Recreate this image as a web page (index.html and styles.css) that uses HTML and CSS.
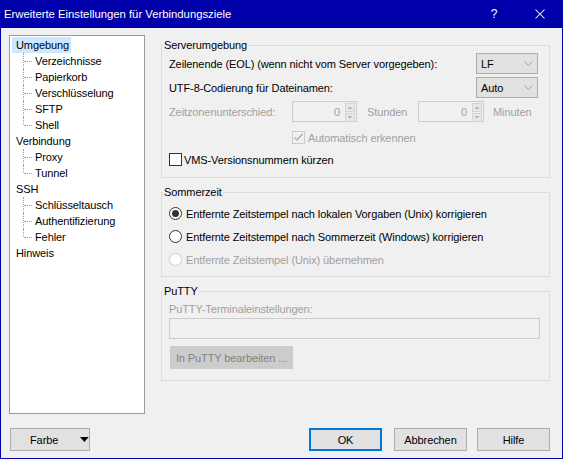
FILE: index.html
```html
<!DOCTYPE html>
<html lang="de">
<head>
<meta charset="utf-8">
<title>Erweiterte Einstellungen für Verbindungsziele</title>
<link rel="stylesheet" href="styles.css">
</head>
<body>
<div class="window">
  <div class="titlebar">
    <span class="title">Erweiterte Einstellungen für Verbindungsziele</span>
    <span class="cap-btn help">?</span>
    <span class="cap-btn close"><svg width="10" height="10" viewBox="0 0 10 10"><path d="M0.5 0.5L9.5 9.5M9.5 0.5L0.5 9.5" stroke="#fff" stroke-width="1.05" fill="none"/></svg></span>
  </div>
  <div class="client">
    <div class="main">
      <div class="tree">
        <ul class="roots">
          <li><span class="label sel">Umgebung</span>
            <ul class="children">
              <li class="child"><span class="label">Verzeichnisse</span></li>
              <li class="child"><span class="label">Papierkorb</span></li>
              <li class="child"><span class="label">Verschlüsselung</span></li>
              <li class="child"><span class="label">SFTP</span></li>
              <li class="child last"><span class="label">Shell</span></li>
            </ul>
          </li>
          <li><span class="label">Verbindung</span>
            <ul class="children">
              <li class="child"><span class="label">Proxy</span></li>
              <li class="child last"><span class="label">Tunnel</span></li>
            </ul>
          </li>
          <li><span class="label">SSH</span>
            <ul class="children">
              <li class="child"><span class="label">Schlüsseltausch</span></li>
              <li class="child"><span class="label">Authentifizierung</span></li>
              <li class="child last"><span class="label">Fehler</span></li>
            </ul>
          </li>
          <li><span class="label">Hinweis</span></li>
        </ul>
      </div>
      <div class="panel">
        <fieldset class="group g1">
          <legend>Serverumgebung</legend>
          <div class="row r-combo">
            <span class="grow">Zeilenende (EOL) (wenn nicht vom Server vorgegeben):</span>
            <div class="combo"><span class="grow">LF</span><svg class="chev" width="9" height="5" viewBox="0 0 9 5"><path d="M0.5 0.5L4.5 4.5L8.5 0.5" stroke="#a2a2a2" fill="none"/></svg></div>
          </div>
          <div class="row r-combo r-combo2">
            <span class="grow">UTF-8-Codierung für Dateinamen:</span>
            <div class="combo"><span class="grow">Auto</span><svg class="chev" width="9" height="5" viewBox="0 0 9 5"><path d="M0.5 0.5L4.5 4.5L8.5 0.5" stroke="#a2a2a2" fill="none"/></svg></div>
          </div>
          <div class="row r-tz disabled">
            <span class="tz-label">Zeitzonenunterschied:</span>
            <div class="spin s1">
              <span class="val">0</span>
              <div class="arrows">
                <span class="arrow"><svg width="8" height="7" viewBox="0 0 8 7"><path d="M1.5 5h5L4 2.5z" fill="#b0b0b0"/></svg></span>
                <span class="arrow"><svg width="8" height="7" viewBox="0 0 8 7"><path d="M1.5 2h5L4 4.5z" fill="#b0b0b0"/></svg></span>
              </div>
            </div>
            <span class="unit u1">Stunden</span>
            <div class="spin s2">
              <span class="val">0</span>
              <div class="arrows">
                <span class="arrow"><svg width="8" height="7" viewBox="0 0 8 7"><path d="M1.5 5h5L4 2.5z" fill="#b0b0b0"/></svg></span>
                <span class="arrow"><svg width="8" height="7" viewBox="0 0 8 7"><path d="M1.5 2h5L4 4.5z" fill="#b0b0b0"/></svg></span>
              </div>
            </div>
            <span class="unit u2">Minuten</span>
          </div>
          <div class="row r-auto disabled">
            <span class="check checked-dis"><svg width="11" height="11" viewBox="0 0 11 11"><path d="M1.5 5.5L4 8L9.5 2" stroke="#a8a8a8" stroke-width="1.2" fill="none"/></svg></span>
            <span>Automatisch erkennen</span>
          </div>
          <div class="row r-vms">
            <span class="check"></span>
            <span>VMS-Versionsnummern kürzen</span>
          </div>
        </fieldset>

        <fieldset class="group g2">
          <legend>Sommerzeit</legend>
          <div class="row r-radio">
            <span class="radio on"></span>
            <span>Entfernte Zeitstempel nach lokalen Vorgaben (Unix) korrigieren</span>
          </div>
          <div class="row r-radio">
            <span class="radio"></span>
            <span>Entfernte Zeitstempel nach Sommerzeit (Windows) korrigieren</span>
          </div>
          <div class="row r-radio disabled">
            <span class="radio dis"></span>
            <span>Entfernte Zeitstempel (Unix) übernehmen</span>
          </div>
        </fieldset>

        <fieldset class="group g3">
          <legend>PuTTY</legend>
          <div class="row r-plabel disabled">PuTTY-Terminaleinstellungen:</div>
          <div class="edit"></div>
          <div class="btn btn-dis">In PuTTY bearbeiten ...</div>
        </fieldset>
      </div>
    </div>
    <div class="buttons">
      <div class="btn btn-farbe"><span class="farbe-text">Farbe</span><svg width="9" height="5" viewBox="0 0 9 5"><path d="M0 0h9L4.5 5z" fill="#000"/></svg></div>
      <div class="spacer"></div>
      <div class="btn btn-ok">OK</div>
      <div class="btn btn-cancel">Abbrechen</div>
      <div class="btn btn-help">Hilfe</div>
    </div>
  </div>
</div>
</body>
</html>
```

FILE: styles.css
```css
* { box-sizing: border-box; }
html, body { margin: 0; padding: 0; }
body {
  width: 563px;
  height: 459px;
  overflow: hidden;
  font-family: "Liberation Sans", Arial, sans-serif;
  font-size: 11px;
  letter-spacing: -0.1px;
  color: #000;
}
.window {
  width: 563px;
  height: 459px;
  background: #0000aa;
  padding: 0 1px 1px 1px;
  display: flex;
  flex-direction: column;
}
.titlebar {
  height: 28px;
  flex: none;
  display: flex;
  align-items: center;
  color: #fff;
}
.title {
  flex: 1;
  padding-left: 3px;
  font-size: 11.3px;
  letter-spacing: 0;
}
.cap-btn {
  height: 28px;
  display: flex;
  align-items: center;
  justify-content: center;
}
.help { width: 46px; font-size: 12px; }
.close { width: 45px; }

.client {
  flex: 1;
  background: #f0f0f0;
  display: flex;
  flex-direction: column;
}
.main {
  display: flex;
  padding: 7px 0 0 8px;
}

/* tree */
.tree {
  width: 136px;
  height: 379px;
  background: #fff;
  border: 1px solid #9a9a9a;
  padding-top: 1px;
}
.tree ul { list-style: none; margin: 0; padding: 0; }
.tree li { line-height: 16px; }
.label {
  display: inline-block;
  height: 16px;
  line-height: 16px;
  padding: 0 2px 0 4px;
  white-space: nowrap;
}
.roots > li > .label { margin-left: 2px; }
.sel { background: #cce8ff; }
.child {
  position: relative;
  padding-left: 21px;
  height: 16px;
}
.child::before {
  content: "";
  position: absolute;
  left: 13px;
  top: 0;
  bottom: 0;
  border-left: 1px dotted #a0a0a0;
}
.child.last::before { bottom: auto; height: 8px; }
.child::after {
  content: "";
  position: absolute;
  left: 14px;
  top: 8px;
  width: 8px;
  border-top: 1px dotted #a0a0a0;
}

/* panel */
.panel {
  margin-left: 16px;
  width: 389px;
  padding-top: 3px;
}
.group {
  margin: 0;
  padding: 0;
  min-width: 0;
  border: 1px solid #dcdcdc;
}
.group + .group { margin-top: 7px; }
legend {
  margin-left: 1px;
  padding: 0 1px;
  line-height: 15px;
  height: 15px;
}
.row {
  display: flex;
  align-items: center;
  padding-left: 7px;
  white-space: nowrap;
}
.grow { flex: 1; }
.disabled { color: #a0a0a0; }

.g1 { padding-bottom: 11px; }
.r-combo { height: 21px; }
.r-combo2 { margin-top: 3px; }
.combo {
  width: 62px;
  height: 21px;
  margin-right: 11px;
  background: #e1e1e1;
  border: 1px solid #adadad;
  display: flex;
  align-items: center;
  padding-left: 4px;
}
.chev { margin-right: 4px; }

.r-tz { height: 21px; margin-top: 3px; }
.tz-label { width: 123px; }
.spin {
  height: 21px;
  border: 1px solid #cccccc;
  display: flex;
  align-items: center;
  padding-right: 1px;
}
.s1 { width: 65px; }
.s2 { width: 66px; }
.val { flex: 1; text-align: right; padding-right: 5px; }
.arrows {
  width: 10px;
  height: 17px;
  display: flex;
  flex-direction: column;
  gap: 1px;
}
.arrow {
  flex: 1;
  border: 1px solid #d4d4d4;
  background: #e8e8e8;
  display: flex;
  align-items: center;
  justify-content: center;
}
.u1 { margin-left: 10px; width: 51px; }
.u2 { margin-left: 9px; }

.check {
  width: 13px;
  height: 13px;
  border: 1px solid #333;
  background: #fff;
  flex: none;
  display: flex;
  align-items: center;
  justify-content: center;
}
.checked-dis { border-color: #cccccc; background: #f0f0f0; }
.r-auto { height: 13px; margin-top: 9px; padding-left: 130px; }
.r-auto .check { margin-right: 3px; }
.r-vms { height: 13px; margin-top: 9px; }
.r-vms .check { margin-right: 2px; }

.g2 { padding-top: 2px; padding-bottom: 5px; }
.r-radio { height: 23px; }
.radio {
  width: 13px;
  height: 13px;
  border: 1px solid #333;
  border-radius: 50%;
  background: #fff;
  margin-right: 4px;
  flex: none;
  display: flex;
  align-items: center;
  justify-content: center;
}
.radio.on::after {
  content: "";
  width: 7px;
  height: 7px;
  border-radius: 50%;
  background: #333;
}
.radio.dis { border-color: #cccccc; }

.g3 { padding-top: 1px; padding-bottom: 11px; }
.r-plabel { height: 17px; }
.edit {
  margin: 1px 0 0 7px;
  width: 371px;
  height: 21px;
  border: 1px solid #cccccc;
  background: #f0f0f0;
}
.btn {
  height: 23px;
  display: flex;
  align-items: center;
  justify-content: center;
  background: #e1e1e1;
  border: 1px solid #adadad;
  white-space: nowrap;
}
.btn-dis {
  margin: 7px 0 0 8px;
  width: 123px;
  background: #cccccc;
  border-color: #cccccc;
  color: #838383;
}

/* bottom buttons */
.buttons {
  display: flex;
  margin-top: 14px;
  padding: 0 12px 0 9px;
}
.spacer { flex: 1; }
.btn-farbe { width: 80px; justify-content: flex-start; padding-left: 19px; }
.farbe-text { width: 52px; }
.btn-ok { width: 73px; border: 2px solid #0078d7; }
.btn-cancel { width: 73px; margin-left: 12px; }
.btn-help { width: 73px; margin-left: 10px; }
```
